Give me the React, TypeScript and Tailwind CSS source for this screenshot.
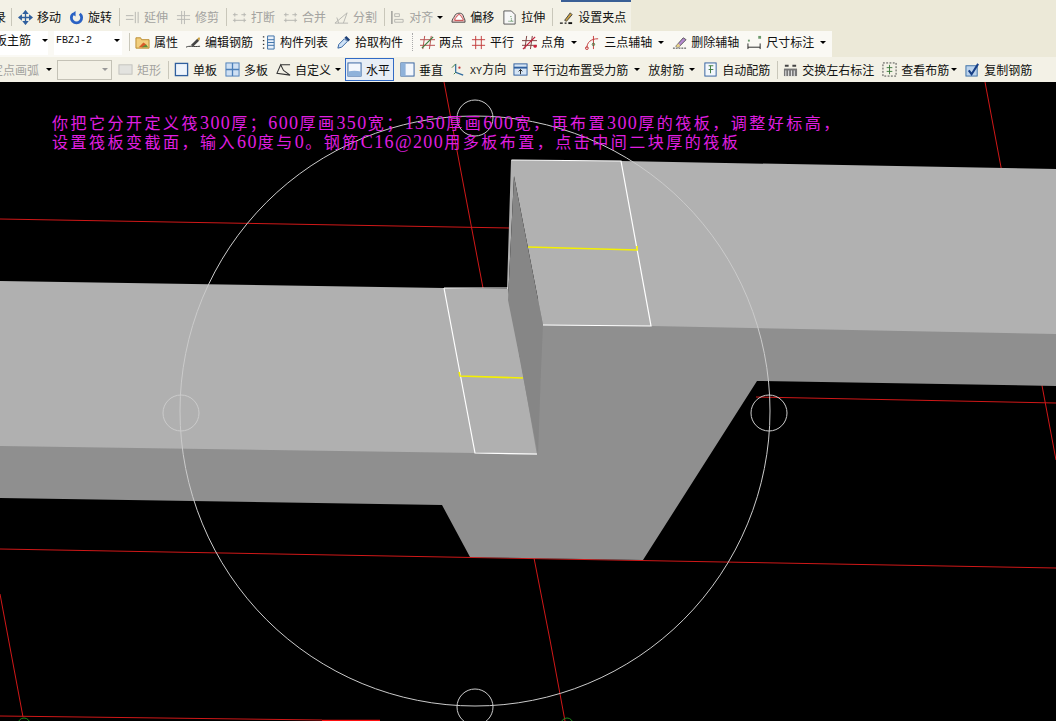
import type { ReactNode } from 'react';

const uiFont = "[font-family:'Noto_Sans_CJK_SC','Liberation_Sans',sans-serif]";

function Ico({ children }: { children: ReactNode }) {
  return (
    <svg width="15" height="15" viewBox="0 0 16 16" fill="none" className="shrink-0">
      {children}
    </svg>
  );
}

function Caret({ className }: { className: string }) {
  return <span className={`h-0 w-0 shrink-0 border-x-[3px] border-t-[3px] border-x-transparent border-t-black ${className}`} />;
}

function Sep({ className = '-mr-[3px]' }: { className?: string }) {
  return <span className={`-ml-px h-[18px] w-px shrink-0 bg-[#c9c7ba] ${className}`} />;
}

// caret sits after gap-1, so the margin passed in is on top of those 4px
function Tool(props: { icon?: ReactNode; label: ReactNode; off?: boolean; caret?: string; className?: string }) {
  return (
    <div className={`flex shrink-0 items-center gap-1 text-[12px] leading-none whitespace-nowrap ${props.off ? 'text-[#a3a3a0]' : 'text-[#111]'} ${props.className ?? ''}`}>
      {props.icon}
      <span>{props.label}</span>
      {props.caret && <Caret className={props.caret} />}
    </div>
  );
}

const Move = (
  <Ico>
    <path d="M8 1v14M1 8h14M8 1 6 3.500h4zM8 15l-2-2.500h4zM1 8l2.500-2v4zM15 8l-2.500-2v4z" stroke="#2f5f9e" strokeWidth="1.4" />
  </Ico>
);
const Rotate = (
  <Ico>
    <path d="M4.500 4a5.500 5.500 0 1 0 7 0" stroke="#2a62c4" strokeWidth="3" />
    <path d="M7 1v6L3 4z" fill="#2a62c4" />
  </Ico>
);
const Extend = (
  <Ico>
    <path d="M1 6h8M1 10h8M11 2v12M14 2v12" stroke="#b5b5b0" />
  </Ico>
);
const Trim = (
  <Ico>
    <path d="M1 6h14M1 10h14M6 1v14M9 1v14" stroke="#b8b8b3" />
  </Ico>
);
const Break = (
  <Ico>
    <path d="M1 5h5M10 5h5M1 11h14M3 3v4M13 3v4M3 9v4M13 9v4" stroke="#b5b5b0" />
  </Ico>
);
const Split = (
  <Ico>
    <path d="M1 14 14 3M1 14h14M5 14 3 8M10 14l4-11" stroke="#b5b5b0" />
  </Ico>
);
const Align = (
  <Ico>
    <path d="M2 1v14" stroke="#9a9a96" strokeWidth="1.500" />
    <path d="M5 4h5v3H5zM5 10h9v3H5z" stroke="#b5b5b0" />
  </Ico>
);
const Offset = (
  <Ico>
    <path d="M1 13c0-4 2-4 3-7s8-4 9 0 2 3 2 7z" stroke="#444" fill="#f4c9c9" />
    <path d="M4 11c0-3 2-3 3-5s3-1 4 1 2 2 2 4z" stroke="#c23a3a" fill="#fff" />
  </Ico>
);
const Stretch = (
  <Ico>
    <path d="M2 1h8l4 4v10H2z" stroke="#555" fill="#f7f7f7" />
    <path d="M9 7h2M10 9v3M7 12h5" stroke="#3a7a3a" strokeDasharray="1 1" />
  </Ico>
);
const Grip = (
  <Ico>
    <path d="M1 14h3M6 14h2" stroke="#111" strokeWidth="1.500" />
    <path d="m6 11 6-8 2 2-6 7z" fill="#c9a040" stroke="#444" />
    <path d="M10 14h4" stroke="#111" strokeWidth="2" />
  </Ico>
);
const Props = (
  <Ico>
    <path d="M1 3h5l1 2h8v9H1z" fill="#f2cf7e" stroke="#b98a2c" />
    <path d="m4 13 5-5 3 2-3 3z" fill="#d85c28" />
    <path d="M7 13l5-3 2 3z" fill="#5a8f3a" />
  </Ico>
);
const EditBar = (
  <Ico>
    <path d="M0 13c4-2 7 0 15-1" stroke="#333" />
    <path d="m5 11 7-7 2 2-6 6z" fill="#444" />
    <path d="m12 4 2-2 1 2-1 2z" fill="#c9a040" />
  </Ico>
);
const List = (
  <Ico>
    <path d="M2 2h2M2 6h2M2 10h2M2 14h2" stroke="#333" strokeWidth="1.500" strokeDasharray="1.500 1" />
    <path d="M7 1h7v14H7z" stroke="#3a6ea5" fill="#eaf1fa" />
    <path d="M7 5h7M7 8h7M7 11h7" stroke="#3a6ea5" />
  </Ico>
);
const Dropper = (
  <Ico>
    <path d="m2 14 1-4 6-6 3 3-6 6z" fill="#cfe2f6" stroke="#2f5f9e" />
    <path d="m9 3 2-2 4 4-2 2z" fill="#1d3f77" />
  </Ico>
);
const TwoPt = (
  <Ico>
    <path d="M5 1 3 15M12 1l-2 14M0 5h16M0 11h16" stroke="#b64a4a" />
    <path d="M2 14 14 2" stroke="#3d7a3d" strokeWidth="1.300" />
  </Ico>
);
const Parallel = (
  <Ico>
    <path d="M5 1v14M11 1v14M1 5h14M1 11h14" stroke="#c23a3a" />
  </Ico>
);
const Angle = (
  <Ico>
    <path d="M5 1 3 15M11 1 9 15M0 6h16M0 11h16" stroke="#7a3a3a" />
    <path d="M1 15 14 2" stroke="#c2203a" strokeWidth="1.300" />
    <circle cx="14" cy="12" r="1.700" fill="#d0203a" />
  </Ico>
);
const ThreePt = (
  <Ico>
    <path d="M2 14C2 8 6 4 14 4M9 1v14" stroke="#c23a3a" />
    <circle cx="2" cy="14" r="1.500" stroke="#c23a3a" />
    <circle cx="9" cy="10" r="1.300" stroke="#3d7a3d" />
  </Ico>
);
const DelAxis = (
  <Ico>
    <path d="M1 14h14" stroke="#333" strokeDasharray="2 1" />
    <path d="m4 12 8-9 3 2-8 8z" fill="#b58ad0" stroke="#555" />
    <path d="m4 12 3-3 2 3-3 1z" fill="#e9d48a" />
  </Ico>
);
const Dim = (
  <Ico>
    <path d="M1 9v6M14 9v6M1 13h13" stroke="#222" />
    <rect x="12" y="1" width="3" height="3" fill="#6d9a6d" />
    <rect x="1" y="5" width="2" height="2" fill="#6d9a6d" />
  </Ico>
);
const Rect = (
  <Ico>
    <rect x="1" y="3" width="14" height="10" fill="#e3e3df" stroke="#c2c2bd" />
  </Ico>
);
const Single = (
  <Ico>
    <rect x="1.500" y="1.500" width="13" height="13" fill="#eef4fb" stroke="#2f5f9e" strokeWidth="1.400" />
  </Ico>
);
const Multi = (
  <Ico>
    <rect x="1" y="1" width="14" height="14" fill="#cfe0f3" stroke="#4d7fb8" />
    <path d="M8 1v14M1 8h14" stroke="#4d7fb8" strokeWidth="1.400" />
  </Ico>
);
const Custom = (
  <Ico>
    <path d="M5 3h10M5 3 1 12l14 2-7-5z" stroke="#333" strokeWidth="1.100" />
  </Ico>
);
const Horiz = (
  <Ico>
    <rect x="1" y="1" width="14" height="14" fill="#f3f7fc" stroke="#2f5f9e" />
    <path d="M1 10c5-1 9-1 14 0v5H1z" fill="#8fb2da" />
  </Ico>
);
const Vert = (
  <Ico>
    <rect x="1" y="1" width="14" height="14" fill="#f3f7fc" stroke="#2f5f9e" />
    <path d="M1 1h5v14H1z" fill="#8fb2da" />
  </Ico>
);
const XY = (
  <Ico>
    <path d="M5 2v9l8 3" stroke="#2f6b9e" strokeWidth="1.300" />
    <path d="M1 6 5 2M3 13l2-2" stroke="#3d7a3d" />
    <circle cx="9" cy="6" r="1.200" fill="#c23a3a" />
  </Ico>
);
const ParaBar = (
  <Ico>
    <rect x="1" y="2" width="14" height="12" fill="#d7e6f5" stroke="#2f5f9e" />
    <path d="M1 6h14" stroke="#2f5f9e" strokeWidth="2" />
    <path d="M8 8v5M6 10l2-2 2 2" stroke="#222" />
  </Ico>
);
const AutoBar = (
  <Ico>
    <rect x="2" y="1" width="12" height="14" fill="#f3f7fc" stroke="#2f5f9e" />
    <path d="M6 4h5M8 4v8M6 8h5" stroke="#3d7a3d" />
  </Ico>
);
const Swap = (
  <Ico>
    <path d="M1 7h14v8H1z" fill="#777" />
    <path d="M3 9v6M6 9v6M9 9v6M12 9v6" stroke="#eee" />
    <path d="M2 4h4M10 4h4" stroke="#444" strokeWidth="2" />
  </Ico>
);
const ViewBar = (
  <Ico>
    <rect x="1" y="1" width="14" height="14" stroke="#444" strokeDasharray="2 1.500" />
    <path d="M8 3v10M5 6h6M5 10h6" stroke="#3d7a3d" />
  </Ico>
);
const CopyBar = (
  <Ico>
    <rect x="1" y="4" width="12" height="11" fill="#bcd3ec" stroke="#3a6ea5" />
    <path d="m4 9 3 4 7-11" stroke="#173f86" strokeWidth="2.200" />
  </Ico>
);

function Num({ children }: { children: ReactNode }) {
  return <span className="[font-family:'Liberation_Serif',serif] text-[18px] leading-none tracking-[1.4px]">{children}</span>;
}

function Drawing() {
  return (
    <svg viewBox="0 82 1056 639" className="block h-[639px] w-[1056px]" fill="none">
      <g stroke="#d01818">
        <path d="M0 219 510 228" />
        <path d="M444 82 483 288" />
        <path d="M985 82 1056 460" />
        <path d="M756 397 1056 403" />
        <path d="M0 549 1056 568" />
        <path d="M534 558 550 640 565 721" />
        <path d="M0 594 23 717" />
        <path d="M0 716 322 720" />
        <path d="M322 720.500H380" stroke="#ff1010" strokeWidth="1.500" />
      </g>
      <circle cx="24" cy="724" r="6" stroke="#1c8a1c" />
      <circle cx="567" cy="724" r="6" stroke="#1c8a1c" />

      {/* mid grey runs under the light faces so no seam shows */}
      <path d="M520 300H1056V386L757 381 643 560 470 557 442 505 0 498V430H520Z" fill="#8f8f8f" />
      <path d="M0 281 444 288 508 289 537 455 475 453 0 446Z" fill="#b0b0b0" />
      <path d="M511 160 621 161 1056 169V334L651 326 543 325 514 176 508 300 507 289Z" fill="#b1b1b1" />
      <path d="M514 176 543 325 541 370 538 455 518 350 508 300Z" fill="#868686" />

      <g stroke="#ffffff" strokeWidth="1.200">
        <path d="M444 288 475 453 537 454" />
        <path d="M444 288H508" />
        <path d="M511.500 160 621 161 651 326 543 325" />
      </g>
      <g stroke="#f4f000" strokeWidth="1.600">
        <path d="M459 372 460 376 523 378" />
        <path d="M528 247 637 250V246" />
      </g>

      <g stroke="#cbcbcb">
        <circle cx="475" cy="411" r="295" />
        <circle cx="475" cy="118" r="18" />
        <circle cx="181" cy="413" r="18" />
        <circle cx="769" cy="413" r="18" />
        <circle cx="475" cy="707" r="18" />
      </g>
    </svg>
  );
}

export default function App() {
  return (
    <div className={`relative flex h-[721px] w-[1056px] flex-col overflow-hidden bg-black ${uiFont}`}>
      {/* 工具栏 */}
      <div className="h-[82px] shrink-0 bg-[#ece9d8]">
        <div className="relative flex h-[31px] w-[631px] items-center gap-2 overflow-hidden bg-[#f3f1e6] pt-[3px]">
          <span className="-mr-[2px] -ml-[6px] text-[12px] leading-none text-[#111]">录</span>
          <Sep className="-mr-[2px]" />
          <Tool icon={Move} label="移动" />
          <Tool icon={Rotate} label="旋转" />
          <Sep />
          <Tool icon={Extend} label="延伸" off />
          <Tool icon={Trim} label="修剪" off />
          <Sep />
          <Tool icon={Break} label="打断" off />
          <Tool icon={Break} label="合并" off />
          <Tool icon={Split} label="分割" off />
          <Sep />
          <Tool icon={Align} label="对齐" off caret="ml-0" />
          <Tool icon={Offset} label="偏移" />
          <Tool icon={Stretch} label="拉伸" />
          <Sep className="-mr-[2px]" />
          <Tool icon={Grip} label="设置夹点" />
          <span className="absolute top-0 left-[561px] h-[2px] w-[75px] bg-[#3a5f96]" />
        </div>

        <div className="flex h-[26px] w-[832px] items-center gap-2 overflow-hidden bg-[#faf9f4] pb-[4px]">
          <div className="-mr-[2px] -ml-[5px] flex h-[26px] shrink-0 items-center bg-white pb-[4px] whitespace-nowrap">
            <span className="text-[12px] leading-none text-[#111]">板主筋</span>
            <Caret className="ml-[11px]" />
          </div>
          <div className="flex h-[26px] w-[68px] shrink-0 items-center justify-between bg-white px-[2px] pb-[4px] [font-family:'Liberation_Mono',monospace] text-[10px] text-[#111]">
            FBZJ-2
            <Caret className="" />
          </div>
          <Sep />
          <Tool icon={Props} label="属性" />
          <Tool icon={EditBar} label="编辑钢筋" />
          <Tool icon={List} label="构件列表" />
          <Tool icon={Dropper} label="拾取构件" />
          <span className="-mr-[2px] ml-px h-[18px] w-[2px] shrink-0 border-l border-dotted border-[#aaa]" />
          <Tool icon={TwoPt} label="两点" />
          <Tool icon={Parallel} label="平行" />
          <Tool icon={Angle} label="点角" caret="ml-[2px]" />
          <Tool icon={ThreePt} label="三点辅轴" caret="ml-[2px]" />
          <Tool icon={DelAxis} label="删除辅轴" />
          <Tool icon={Dim} label="尺寸标注" caret="ml-[2px]" />
        </div>

        <div className="flex h-[25px] items-center gap-2 overflow-hidden bg-[#f3f1e6]">
          <Tool label="定点画弧" off caret="ml-[3px]" className="-mr-[3px] -ml-[9px]" />
          <div className="-mr-[2px] flex h-[20px] w-[55px] shrink-0 items-center justify-end border border-[#c4c2b6] bg-[#f3f1e6] pr-[3px]">
            <span className="h-0 w-0 border-x-[3px] border-t-[3px] border-x-transparent border-t-[#999]" />
          </div>
          <Tool icon={Rect} label="矩形" off />
          <Sep />
          <Tool icon={Single} label="单板" />
          <Tool icon={Multi} label="多板" />
          <Tool icon={Custom} label="自定义" caret="ml-0" className="-mr-[4px]" />
          <div className="-mr-[2px] flex h-[23px] shrink-0 items-center border border-[#316ac5] bg-[#e8eef6] pr-[3px] pl-px">
            <Tool icon={Horiz} label="水平" />
          </div>
          <Tool icon={Vert} label="垂直" />
          <Tool
            icon={XY}
            label={
              <>
                <span className="[font-family:'Liberation_Mono',monospace] text-[10px]">XY</span>方向
              </>
            }
            className="-mr-px"
          />
          <Tool icon={ParaBar} label="平行边布置受力筋" caret="ml-[2px]" />
          <Tool label="放射筋" caret="ml-px" />
          <Tool icon={AutoBar} label="自动配筋" />
          <Sep />
          <Tool icon={Swap} label="交换左右标注" />
          <Tool icon={ViewBar} label="查看布筋" caret="-ml-[2px]" />
          <Tool icon={CopyBar} label="复制钢筋" />
        </div>
      </div>

      {/* 绘图区 */}
      <div className="relative flex-1">
        <Drawing />
        <div className="absolute top-[31px] left-[52px] text-[16px] leading-[19px] tracking-[2.5px] whitespace-nowrap text-[#e01fe0]">
          <div className="h-[19px]">
            你把它分开定义筏<Num>300</Num>厚；<Num>600</Num>厚画<Num>350</Num>宽；<Num>1350</Num>厚画<Num>600</Num>宽，再布置<Num>300</Num>厚的筏板，调整好标高，
          </div>
          <div className="h-[19px]">
            设置筏板变截面，输入<Num>60</Num>度与<Num>0</Num>。钢筋<Num>C16@200</Num>用多板布置，点击中间二块厚的筏板
          </div>
        </div>
      </div>
    </div>
  );
}
